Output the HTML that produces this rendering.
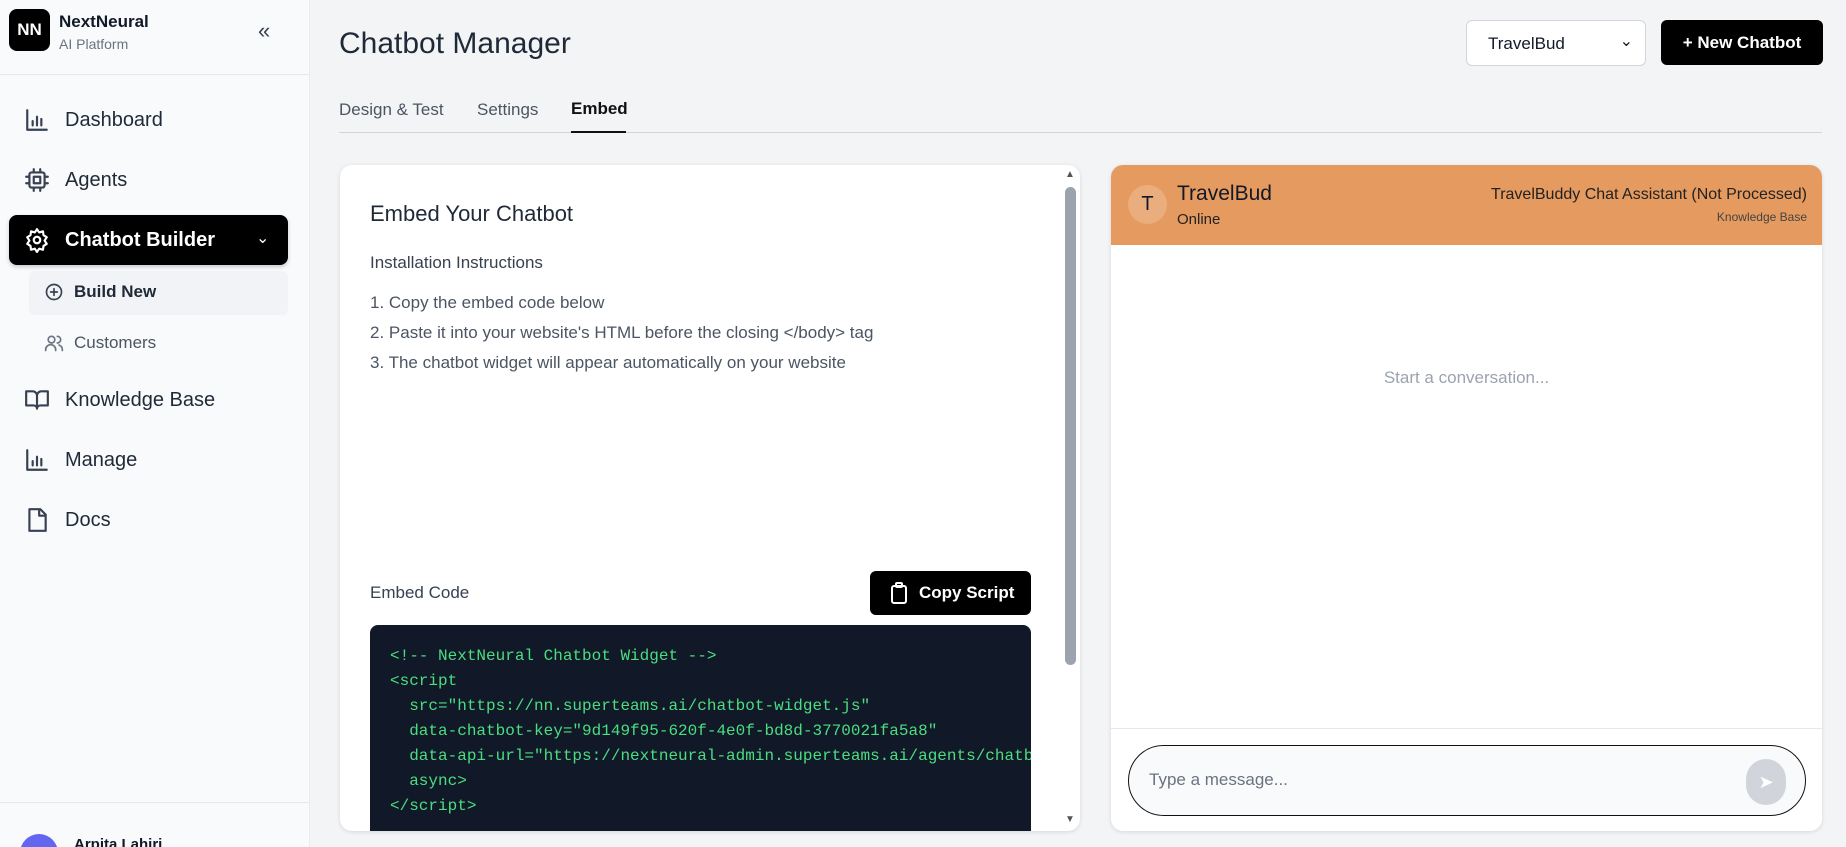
<!DOCTYPE html>
<html><head><meta charset="utf-8"><style>
*{box-sizing:border-box;margin:0;padding:0}
html{width:1846px;height:847px;overflow:hidden}
body{width:1846px;height:847px;overflow:hidden;background:#f3f4f6;font-family:"Liberation Sans",sans-serif;color:#111827;position:relative}
.abs{position:absolute}
#side{left:0;top:0;width:310px;height:847px;background:#f8fafc;border-right:1px solid #e9ebef;overflow:hidden}
.nav{position:absolute;left:24px;font-size:20px;color:#1f2937;display:flex;align-items:center}
.nav svg{width:26px;height:26px;margin-right:15px;fill:none;stroke:#374151;stroke-width:2;stroke-linecap:round;stroke-linejoin:round}
.card{background:#fff;border-radius:12px;box-shadow:0 1px 4px rgba(0,0,0,.12);overflow:hidden}
pre{font-family:"Liberation Mono",monospace;font-size:16px;line-height:25px;color:#4ade80}
</style></head><body>
<div id="side" class="abs">
  <div class="abs" style="left:9px;top:9px;width:41px;height:42px;background:#000;border-radius:8px;color:#fff;font-weight:bold;font-size:17px;display:flex;align-items:center;justify-content:center">NN</div>
  <div class="abs" style="left:59px;top:12px;font-weight:bold;font-size:17px">NextNeural</div>
  <div class="abs" style="left:59px;top:36px;font-size:14px;color:#6b7280">AI Platform</div>
  <div class="abs" style="left:258px;top:18px;font-size:22px;color:#374151">«</div>
  <div class="abs" style="left:0;top:74px;width:310px;height:1px;background:#e5e7eb"></div>
  <div class="nav" style="top:107px"><svg viewBox="0 0 24 24"><path d="M3 3v18h18M8 17v-4M12 17V9M16 17v-6"/></svg>Dashboard</div>
  <div class="nav" style="top:167px"><svg viewBox="0 0 24 24"><rect x="5" y="5" width="14" height="14" rx="2"/><rect x="9" y="9" width="6" height="6"/><path d="M9 2v3M15 2v3M9 19v3M15 19v3M2 9h3M2 15h3M19 9h3M19 15h3"/></svg>Agents</div>
  <div class="abs" style="left:9px;top:215px;width:279px;height:50px;background:#000;border-radius:8px;box-shadow:0 2px 4px rgba(0,0,0,.2)"></div>
  <div class="nav" style="top:227px;color:#fff;font-weight:bold"><svg viewBox="0 0 24 24" style="stroke:#fff"><circle cx="12" cy="12" r="3"/><path d="M12 2l2 3 3.5-1 .5 3.5 3 2-2 3 2 3-3 2-.5 3.5-3.5-1-2 3-2-3-3.5 1-.5-3.5-3-2 2-3-2-3 3-2 .5-3.5 3.5 1z"/></svg>Chatbot Builder</div>
  <div class="abs" style="left:256px;top:228px;color:#fff;font-size:16px">&#8964;</div>
  <div class="abs" style="left:29px;top:271px;width:259px;height:44px;background:#f1f3f6;border-radius:6px"></div>
  <div class="nav" style="left:44px;top:282px;font-size:17px;font-weight:bold"><svg viewBox="0 0 24 24" style="width:20px;height:20px;margin-right:10px"><circle cx="12" cy="12" r="9"/><path d="M12 8v8M8 12h8"/></svg>Build New</div>
  <div class="nav" style="left:44px;top:333px;font-size:17px;color:#4b5563"><svg viewBox="0 0 24 24" style="width:20px;height:20px;margin-right:10px;stroke:#6b7280"><circle cx="9" cy="8" r="4"/><path d="M2 21v-1a6 6 0 0112 0v1M16 4a4 4 0 010 8M22 21v-1a6 6 0 00-4-5.6"/></svg>Customers</div>
  <div class="nav" style="top:387px"><svg viewBox="0 0 24 24"><path d="M2 4h6a4 4 0 014 4v12a3 3 0 00-3-3H2zM22 4h-6a4 4 0 00-4 4v12a3 3 0 013-3h7z"/></svg>Knowledge Base</div>
  <div class="nav" style="top:447px"><svg viewBox="0 0 24 24"><path d="M3 3v18h18M8 17v-4M12 17V9M16 17v-6"/></svg>Manage</div>
  <div class="nav" style="top:507px"><svg viewBox="0 0 24 24"><path d="M5 2h10l5 5v15H5zM14 2v6h6"/></svg>Docs</div>
  <div class="abs" style="left:0;top:802px;width:310px;height:1px;background:#e5e7eb"></div>
  <div class="abs" style="left:20px;top:834px;width:38px;height:38px;border-radius:50%;background:#6366f1"></div>
  <div class="abs" style="left:74px;top:836px;font-size:15px;font-weight:bold">Arpita Lahiri</div>
</div>

<div class="abs" style="left:339px;top:27px;font-size:30px;color:#1f2937">Chatbot Manager</div>
<div class="abs" style="left:1466px;top:20px;width:180px;height:46px;background:#fff;border:1px solid #d1d5db;border-radius:6px;font-size:17px;padding:13px 0 0 21px">TravelBud<span style="position:absolute;right:12px;top:10px;font-size:16px">&#8964;</span></div>
<div class="abs" style="left:1661px;top:20px;width:162px;height:45px;background:#000;border-radius:6px;color:#fff;font-weight:bold;font-size:17px;text-align:center;line-height:45px">+ New Chatbot</div>
<div class="abs" style="left:339px;top:100px;font-size:17px;color:#4b5563">Design &amp; Test</div>
<div class="abs" style="left:477px;top:100px;font-size:17px;color:#4b5563">Settings</div>
<div class="abs" style="left:571px;top:99px;font-size:17px;font-weight:bold;color:#111">Embed</div>
<div class="abs" style="left:339px;top:132px;width:1483px;height:1px;background:#d1d5db"></div>
<div class="abs" style="left:571px;top:131px;width:55px;height:2px;background:#111"></div>

<div class="abs card" style="left:340px;top:165px;width:740px;height:666px">
  <div class="abs" style="left:30px;top:36px;font-size:22px;color:#1f2937">Embed Your Chatbot</div>
  <div class="abs" style="left:30px;top:88px;font-size:17px;color:#374151">Installation Instructions</div>
  <div class="abs" style="left:30px;top:123px;font-size:17px;color:#4b5563;line-height:30px">1. Copy the embed code below<br>2. Paste it into your website's HTML before the closing &lt;/body&gt; tag<br>3. The chatbot widget will appear automatically on your website</div>
  <div class="abs" style="left:30px;top:418px;font-size:17px;color:#374151">Embed Code</div>
  <div class="abs" style="left:530px;top:406px;width:161px;height:44px;background:#000;border-radius:6px;color:#fff;font-weight:bold;font-size:17px;line-height:44px;padding-left:49px"><svg class="abs" style="left:20px;top:11px" width="18" height="22" viewBox="0 0 18 22" fill="none" stroke="#fff" stroke-width="2"><rect x="2" y="4" width="14" height="17" rx="2"/><rect x="6" y="1" width="6" height="4" rx="1"/></svg>Copy Script</div>
  <div class="abs" style="left:30px;top:460px;width:661px;height:220px;background:#111827;border-radius:8px;overflow:hidden;padding:19px 0 0 20px"><pre>&lt;!-- NextNeural Chatbot Widget --&gt;
&lt;script
  src="https://nn.superteams.ai/chatbot-widget.js"
  data-chatbot-key="9d149f95-620f-4e0f-bd8d-3770021fa5a8"
  data-api-url="https://nextneural-admin.superteams.ai/agents/chatbot"
  async&gt;
&lt;/script&gt;</pre></div>
  <div class="abs" style="left:725px;top:22px;width:11px;height:478px;background:#9ca3af;border-radius:6px"></div>
  <div class="abs" style="left:725px;top:4px;font-size:10px;color:#555">▲</div>
  <div class="abs" style="left:725px;top:649px;font-size:10px;color:#555">▼</div>
</div>

<div class="abs card" style="left:1111px;top:165px;width:711px;height:666px">
  <div class="abs" style="left:0;top:0;width:711px;height:80px;background:#e59a5f"></div>
  <div class="abs" style="left:17px;top:20px;width:39px;height:39px;border-radius:50%;background:#eaae7e;font-size:20px;text-align:center;line-height:39px">T</div>
  <div class="abs" style="left:66px;top:17px;font-size:21px">TravelBud</div>
  <div class="abs" style="left:66px;top:46px;font-size:15px;color:#222">Online</div>
  <div class="abs" style="right:15px;top:21px;font-size:16px;color:#222">TravelBuddy Chat Assistant (Not Processed)</div>
  <div class="abs" style="right:15px;top:45px;font-size:12px;color:#444">Knowledge Base</div>
  <div class="abs" style="left:0;top:203px;width:711px;text-align:center;font-size:17px;color:#9ca3af">Start a conversation...</div>
  <div class="abs" style="left:0;top:563px;width:711px;height:1px;background:#e5e7eb"></div>
  <div class="abs" style="left:17px;top:580px;width:678px;height:71px;border:1.5px solid #111;border-radius:36px;background:#f9fafb"></div>
  <div class="abs" style="left:38px;top:605px;font-size:17px;color:#6b7280">Type a message...</div>
  <div class="abs" style="left:635px;top:594px;width:40px;height:46px;border-radius:20px;background:#d1d5db;color:#fff;font-size:18px;text-align:center;line-height:46px">➤</div>
</div>
</body></html>
